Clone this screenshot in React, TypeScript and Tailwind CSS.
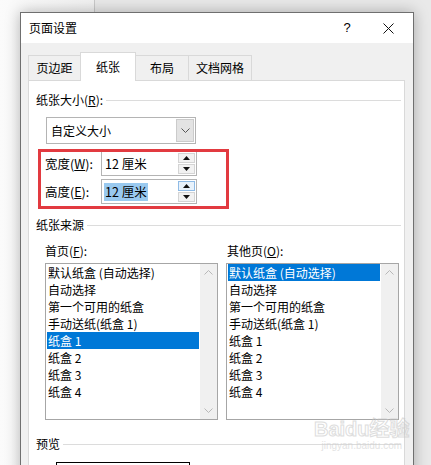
import React from 'react';

const trays = [
  '默认纸盒 (自动选择)',
  '自动选择',
  '第一个可用的纸盒',
  '手动送纸(纸盒 1)',
  '纸盒 1',
  '纸盒 2',
  '纸盒 3',
  '纸盒 4',
];

function Chevron({ up, color = '#b8b8b8' }: { up?: boolean; color?: string }) {
  return (
    <svg width="9" height="5" viewBox="0 0 9 5">
      <path d={up ? 'M0.5 4.5 L4.5 0.5 L8.5 4.5' : 'M0.5 0.5 L4.5 4.5 L8.5 0.5'} fill="none" stroke={color} strokeWidth="1" />
    </svg>
  );
}

function Tri({ up }: { up?: boolean }) {
  return (
    <svg width="7" height="4" viewBox="0 0 7 4">
      <path d={up ? 'M0 4 L3.5 0 L7 4Z' : 'M0 0 L3.5 4 L7 0Z'} fill="#111" />
    </svg>
  );
}

function SpinBox({ selected }: { selected?: boolean }) {
  return (
    <div className="flex w-[96px] h-[25px] border border-[#b4b4b4] bg-white">
      <div className="flex-1 flex items-center pl-[2px]">
        <span className={`px-[1px] leading-[18px] text-[12.5px] ${selected ? 'bg-[#99c9ef]' : ''}`}>12 厘米</span>
      </div>
      <div className="flex flex-col w-[18px] gap-[1px] py-[1px] pr-[1px]">
        <div className={`flex-1 flex items-center justify-center border ${selected ? 'border-[#8fbbe6] bg-[#e8f2fb]' : 'border-[#d4d4d4] bg-[#f2f2f2]'}`}>
          <Tri up />
        </div>
        <div className="flex-1 flex items-center justify-center border border-[#d4d4d4] bg-[#f2f2f2]">
          <Tri />
        </div>
      </div>
    </div>
  );
}

function TrayList({ selected }: { selected: number }) {
  return (
    <div className="flex w-[173px] h-[157px] border border-[#a6a6a6] bg-white">
      <div className="flex-1 flex flex-col">
        {trays.map((t, i) => (
          <div
            key={t}
            className={`h-[17px] mx-[1px] pl-[1px] leading-[17px] whitespace-nowrap ${
              i === selected ? 'bg-[#0078d7] text-white' : ''
            }`}
          >
            {t}
          </div>
        ))}
      </div>
      <div className="w-[17px] bg-[#f0f0f0] flex flex-col justify-between items-center py-[6px]">
        <Chevron up />
        <Chevron />
      </div>
    </div>
  );
}

function Section({ label }: { label: React.ReactNode }) {
  return (
    <div className="flex items-center h-[16px] pl-[7px] pr-[3px] gap-[3px]">
      <span className="leading-[16px] whitespace-nowrap">{label}</span>
      <div className="flex-1 h-px bg-[#dcdcdc] mt-[1px]" />
    </div>
  );
}

export default function App() {
  return (
    <div className="relative w-[431px] h-[465px] overflow-hidden bg-[#ebebeb] font-['Noto_Sans_CJK_SC','Microsoft_YaHei',sans-serif] text-[12px] text-black">
      {/* desktop behind */}
      <div className="flex h-full">
        <div className="w-[95px] h-full bg-gradient-to-r from-[#fbfbfb] to-[#f1f1f1] border-r border-[#c9c9c9]" />
        <div className="flex-1 bg-[#e9e9e9]" />
      </div>

      {/* dialog window */}
      <div className="absolute left-[20px] top-[12px] w-[394px] h-[470px] border border-[#6f6f6f] bg-[#f0f0f0] shadow-[0_0_14px_rgba(0,0,0,0.28)] flex flex-col">
        {/* title bar */}
        <div className="h-[30px] bg-white flex items-center pl-[8px] shrink-0">
          <span className="leading-[16px]">页面设置</span>
          <div className="flex-1" />
          <span className="w-[10px] text-center text-[13px] leading-[16px] mr-[31px] font-['Liberation_Sans',sans-serif]">?</span>
          <svg width="11" height="11" viewBox="0 0 11 11" className="mr-[19px]">
            <path d="M0.5 0.5 L10.5 10.5 M10.5 0.5 L0.5 10.5" stroke="#111" strokeWidth="1" />
          </svg>
        </div>

        {/* body */}
        <div className="flex-1 pl-[7px] pt-[9px] pr-[9px]">
          {/* tabs */}
          <div className="flex items-end h-[28px] relative z-10">
            <div className="w-[52px] h-[25px] border-t border-l border-[#d9d9d9] flex items-center justify-center leading-[16px]">
              页边距
            </div>
            <div className="w-[56px] h-[29px] -mb-px bg-white border-t border-l border-r border-[#d9d9d9] flex items-center justify-center leading-[16px] pb-[1px]">
              纸张
            </div>
            <div className="w-[52px] h-[25px] border-t border-[#d9d9d9] flex items-center justify-center leading-[16px]">
              布局
            </div>
            <div className="w-[64px] h-[25px] border-t border-l border-r border-[#d9d9d9] flex items-center justify-center leading-[16px]">
              文档网格
            </div>
          </div>

          {/* panel */}
          <div className="relative w-[377px] h-[420px] bg-white border border-[#d9d9d9]">
            <div className="pt-[11px]">
              <Section label={<>纸张大小(<u>R</u>):</>} />

              <div className="ml-[17px] mt-[9px] w-[150px] h-[27px] border border-[#b4b4b4] bg-white flex">
                <div className="flex-1 flex items-center pl-[4px] leading-[16px]">自定义大小</div>
                <div className="w-[18px] my-[1px] mr-[1px] bg-[#e3e3e3] border border-[#cbcbcb] flex items-center justify-center">
                  <Chevron color="#555" />
                </div>
              </div>

              <div className="ml-[16px] mt-[7px] flex items-center">
                <span className="w-[56px] leading-[16px] text-[12.5px]">宽度(<u>W</u>):</span>
                <SpinBox />
              </div>
              <div className="ml-[16px] mt-[3px] flex items-center">
                <span className="w-[56px] leading-[16px] text-[12.5px]">高度(<u>E</u>):</span>
                <SpinBox selected />
              </div>

              <div className="mt-[13px]">
                <Section label="纸张来源" />
              </div>

              <div className="ml-[16px] mt-[10px] flex gap-[8px]">
                <div className="flex flex-col gap-[4px]">
                  <span className="leading-[16px]">首页(<u>F</u>):</span>
                  <TrayList selected={4} />
                </div>
                <div className="flex flex-col gap-[4px]">
                  <span className="leading-[16px] pl-[1px]">其他页(<u>O</u>):</span>
                  <TrayList selected={0} />
                </div>
              </div>

              <div className="mt-[16px]">
                <Section label="预览" />
              </div>

              <div className="ml-[27px] mt-[10px] w-[134px] h-[40px] border border-black bg-white" />
            </div>

            {/* red annotation box */}
            <div className="absolute left-[9px] top-[68px] w-[191px] h-[60px] border-[3px] border-[#e23a40]" />

            {/* watermark */}
            <div className="absolute left-[285px] top-[336px] flex flex-col items-center opacity-60 pointer-events-none">
              <span className="text-[20px] leading-[22px] font-bold text-transparent [-webkit-text-stroke:1px_#c8c8c8] font-['Liberation_Sans',sans-serif] whitespace-nowrap">
                Baidu<span className="font-['Noto_Sans_CJK_SC',sans-serif]">经验</span>
              </span>
              <span className="text-[10px] leading-[12px] text-[#d0d0d0] font-['Liberation_Sans',sans-serif]">jingyan.baidu.com</span>
            </div>
          </div>
        </div>
      </div>
    </div>
  );
}
